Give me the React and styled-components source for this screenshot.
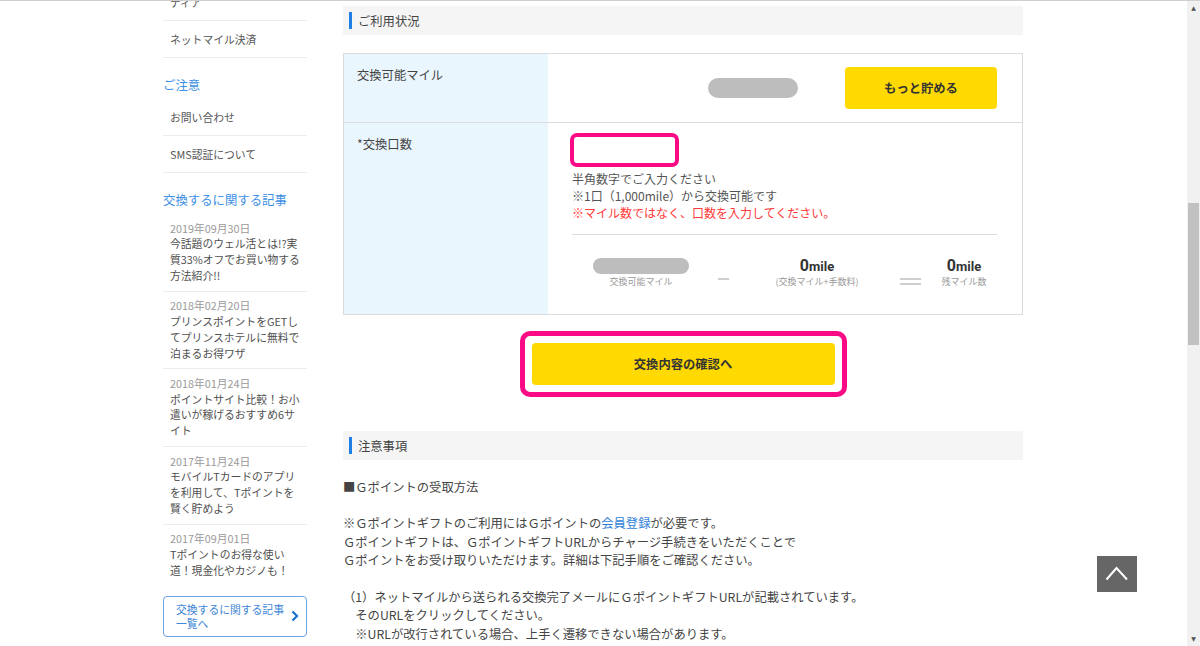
import React from 'react';
import styled, { createGlobalStyle } from 'styled-components';

const GlobalStyle = createGlobalStyle`
  html, body {
    margin: 0;
    padding: 0;
    background: #fff;
  }
  body {
    font-family: "Noto Sans CJK JP", "Noto Sans", sans-serif;
    color: #444;
  }
  * {
    box-sizing: border-box;
  }
`;

const menuTop = ['ディア', 'ネットマイル決済'];
const notice = ['お問い合わせ', 'SMS認証について'];
const articles = [
  { date: '2019年09月30日', title: '今話題のウェル活とは!?実質33%オフでお買い物する方法紹介!!' },
  { date: '2018年02月20日', title: 'プリンスポイントをGETしてプリンスホテルに無料で泊まるお得ワザ' },
  { date: '2018年01月24日', title: 'ポイントサイト比較！お小遣いが稼げるおすすめ6サイト' },
  { date: '2017年11月24日', title: 'モバイルTカードのアプリを利用して、Tポイントを賢く貯めよう' },
  { date: '2017年09月01日', title: 'Tポイントのお得な使い道！現金化やカジノも！' },
];

const App = () => {
  return (
    <>
      <GlobalStyle />
      <Screen>
        <Viewport>
          <Container>
            <Sidebar>
              {menuTop.map((m) => (
                <NavItem key={m}>{m}</NavItem>
              ))}
              <NavHeading>ご注意</NavHeading>
              {notice.map((m) => (
                <NavItem key={m}>{m}</NavItem>
              ))}
              <NavHeading>交換するに関する記事</NavHeading>
              {articles.map((a) => (
                <Article key={a.date}>
                  <ArticleDate>{a.date}</ArticleDate>
                  <ArticleTitle>{a.title}</ArticleTitle>
                </Article>
              ))}
              <MoreLink>
                <span>交換するに関する記事一覧へ</span>
                <svg width="8" height="12" viewBox="0 0 8 12">
                  <polyline points="1.5,1.5 6,6 1.5,10.5" fill="none" stroke="#1a6fd0" strokeWidth="2.2" />
                </svg>
              </MoreLink>
            </Sidebar>

            <Main>
              <SectionTitle>ご利用状況</SectionTitle>
              <Table>
                <Row>
                  <Label>交換可能マイル</Label>
                  <ValueCell $inline>
                    <Pill $w={90} $h={20} />
                    <YellowButton $w={152}>もっと貯める</YellowButton>
                  </ValueCell>
                </Row>
                <Row>
                  <Label>*交換口数</Label>
                  <ValueCell>
                    <CountInput />
                    <Hints>
                      <div>半角数字でご入力ください</div>
                      <div>※1口（1,000mile）から交換可能です</div>
                      <Warn>※マイル数ではなく、口数を入力してください。</Warn>
                    </Hints>
                    <Summary>
                      <SumCol>
                        <Pill $w={96} $h={16} />
                        <Caption>交換可能マイル</Caption>
                      </SumCol>
                      <Operator>
                        <Bar />
                      </Operator>
                      <SumCol>
                        <Amount>0<small>mile</small></Amount>
                        <Caption>(交換マイル+手数料)</Caption>
                      </SumCol>
                      <Operator>
                        <Bar $w={21} />
                        <Bar $w={21} />
                      </Operator>
                      <SumCol $shift={9}>
                        <Amount>0<small>mile</small></Amount>
                        <Caption>残マイル数</Caption>
                      </SumCol>
                    </Summary>
                  </ValueCell>
                </Row>
              </Table>

              <ConfirmFrame>
                <YellowButton $w={303}>交換内容の確認へ</YellowButton>
              </ConfirmFrame>

              <SectionTitle>注意事項</SectionTitle>
              <Notes>
                <p>■Ｇポイントの受取方法</p>
                <p>
                  ※Ｇポイントギフトのご利用にはＧポイントの<a>会員登録</a>が必要です。
                  <br />
                  Ｇポイントギフトは、ＧポイントギフトURLからチャージ手続きをいただくことで
                  <br />
                  Ｇポイントをお受け取りいただけます。詳細は下記手順をご確認ください。
                </p>
                <p>
                  （1）ネットマイルから送られる交換完了メールにＧポイントギフトURLが記載されています。
                  <Indent>そのURLをクリックしてください。</Indent>
                  <Indent>※URLが改行されている場合、上手く遷移できない場合があります。</Indent>
                  <Indent>その場合はURLをすべてコピーし、ブラウザのアドレスバーに貼り付けてください。</Indent>
                </p>
              </Notes>
            </Main>
          </Container>

          <PageTop>
            <svg width="40" height="36" viewBox="0 0 40 36">
              <polyline points="9.5,23.5 19.5,12 30,23.5" fill="none" stroke="#fff" strokeWidth="2" />
            </svg>
          </PageTop>
        </Viewport>

        <Scrollbar>
          <ScrollArrow>▲</ScrollArrow>
          <ScrollTrack>
            <ScrollThumb />
          </ScrollTrack>
          <ScrollArrow>▼</ScrollArrow>
        </Scrollbar>
      </Screen>
    </>
  );
};

export default App;

const Screen = styled.div`
  display: flex;
  height: 646px;
  border-top: 1px solid #cfcfcf;
  overflow: hidden;
`;

const Viewport = styled.div`
  flex: 1;
  position: relative;
  overflow: hidden;
  padding-right: 1px;
`;

const Container = styled.div`
  width: 860px;
  margin: 0 auto;
  display: flex;
  align-items: flex-start;
  gap: 36px;
`;

const Sidebar = styled.aside`
  width: 144px;
  flex-shrink: 0;
  margin-top: -17px;
`;

const NavItem = styled.div`
  padding: 10px 7px 9px;
  font-size: 10.8px;
  line-height: 17px;
  color: #555;
  border-bottom: 1px solid #ececec;
`;

const NavHeading = styled.div`
  margin: 17px 0 4px;
  font-size: 12.4px;
  line-height: 20px;
  color: #3d8fe4;
`;

const Article = styled.div`
  padding: 6.5px 4px 7px 7px;
  border-bottom: 1px solid #ececec;
  font-size: 10.8px;
  line-height: 15.8px;
  &:last-of-type {
    border-bottom: none;
  }
`;

const ArticleDate = styled.div`
  color: #9a9a9a;
`;

const ArticleTitle = styled.div`
  color: #505050;
`;

const MoreLink = styled.a`
  margin-top: 10px;
  display: flex;
  align-items: center;
  justify-content: space-between;
  padding: 5.5px 7px 5.5px 12px;
  border: 1px solid #6aa3e0;
  border-radius: 4px;
  font-size: 10.8px;
  line-height: 14px;
  color: #3d86d8;
  span {
    width: 112px;
  }
`;

const Main = styled.main`
  width: 680px;
  padding-top: 5px;
  font-size: 12.3px;
`;

const SectionTitle = styled.h2`
  margin: 0;
  height: 29px;
  display: flex;
  align-items: center;
  padding-left: 6px;
  background: #f5f5f5;
  font-size: 12.3px;
  font-weight: 400;
  color: #444;
  &::before {
    content: '';
    width: 3px;
    height: 17px;
    margin-right: 6px;
    background: #1f7de6;
  }
`;

const Table = styled.div`
  margin-top: 18px;
  border: 1px solid #dcdcdc;
`;

const Row = styled.div`
  display: grid;
  grid-template-columns: 204px 1fr;
  & + & {
    border-top: 1px solid #dcdcdc;
  }
`;

const Label = styled.div`
  background: #eaf6fe;
  padding: 13px 13px;
  line-height: 17px;
  color: #444;
`;

const ValueCell = styled.div`
  padding: ${(p) => (p.$inline ? '13px 25px 13px 0' : '10px 25px 26px 24px')};
  ${(p) =>
    p.$inline &&
    `
    display: flex;
    align-items: center;
    justify-content: flex-end;
    gap: 47px;
  `}
`;

const Pill = styled.div`
  width: ${(p) => p.$w}px;
  height: ${(p) => p.$h}px;
  border-radius: ${(p) => p.$h / 2}px;
  background: #bdbdbd;
`;

const YellowButton = styled.button`
  width: ${(p) => p.$w}px;
  height: 42px;
  border: none;
  border-radius: 4px;
  background: #ffd900;
  font-family: inherit;
  font-size: 12.3px;
  font-weight: 700;
  color: #333;
  cursor: pointer;
`;

const CountInput = styled.input`
  display: block;
  margin-left: -2px;
  width: 109px;
  height: 34px;
  border: 4px solid #fb0a86;
  border-radius: 7px;
  outline: none;
  background: #fff;
`;

const Hints = styled.div`
  margin-top: 2.5px;
  padding-bottom: 13.5px;
  border-bottom: 1px solid #dcdcdc;
  font-size: 12px;
  line-height: 17px;
  color: #555;
`;

const Warn = styled.div`
  color: #ff3a3a;
`;

const Summary = styled.div`
  display: grid;
  grid-template-columns: 138px 26px 162px 24px 1fr;
  padding-top: 22px;
`;

const SumCol = styled.div`
  display: flex;
  flex-direction: column;
  align-items: center;
  padding-left: ${(p) => p.$shift || 0}px;
  ${Pill} {
    margin: 1px 0;
  }
`;

const Amount = styled.div`
  height: 18px;
  line-height: 18px;
  font-family: Roboto, "Liberation Sans", sans-serif;
  font-weight: 700;
  font-size: 16px;
  color: #333;
  small {
    font-size: 13px;
  }
`;

const Caption = styled.div`
  margin-top: 1px;
  font-size: 9px;
  line-height: 12px;
  color: #999;
`;

const Operator = styled.div`
  padding-top: 21px;
  display: flex;
  flex-direction: column;
  align-items: center;
  gap: 3px;
`;

const Bar = styled.div`
  width: ${(p) => p.$w || 11}px;
  height: 2px;
  background: #cfcfcf;
`;

const ConfirmFrame = styled.div`
  margin: 16px auto 34px;
  width: 327px;
  padding: 7px;
  border: 5px solid #fb0a86;
  border-radius: 10px;
`;

const Notes = styled.div`
  padding-top: 17.5px;
  line-height: 18.4px;
  color: #444;
  p {
    margin: 0 0 18.4px;
  }
  a {
    color: #2f7fd8;
  }
`;

const Indent = styled.span`
  display: block;
  padding-left: 1em;
`;

const PageTop = styled.a`
  position: absolute;
  right: 50px;
  bottom: 54px;
  width: 40px;
  height: 36px;
  background: #666;
  display: flex;
`;

const Scrollbar = styled.div`
  width: 13px;
  background: #f1f1f1;
  display: flex;
  flex-direction: column;
`;

const ScrollArrow = styled.div`
  height: 14px;
  font-size: 6px;
  line-height: 14px;
  text-align: center;
  color: #505050;
  font-family: "DejaVu Sans", sans-serif;
`;

const ScrollTrack = styled.div`
  flex: 1;
  padding: 0 1px;
`;

const ScrollThumb = styled.div`
  margin-top: 188px;
  height: 142px;
  background: #c1c1c1;
`;
